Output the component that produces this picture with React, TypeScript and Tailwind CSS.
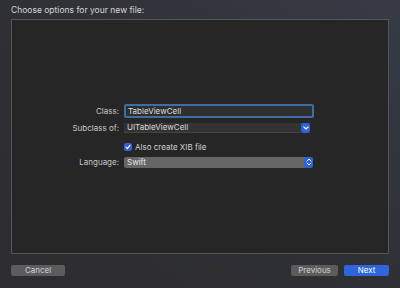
import React from 'react';

const font = { fontFamily: '"Inter", "Liberation Sans", sans-serif' };

const ChevronDown = () => (
  <svg width="6" height="4" viewBox="0 0 6 4" fill="none">
    <path d="M0.8 0.8 L3 3 L5.2 0.8" stroke="white" strokeWidth="1.1" strokeLinecap="round" strokeLinejoin="round" />
  </svg>
);

const UpDown = () => (
  <svg width="6" height="8" viewBox="0 0 6 8" fill="none">
    <path d="M1 3 L3 1 L5 3" stroke="white" strokeWidth="1" strokeLinecap="round" strokeLinejoin="round" />
    <path d="M1 5 L3 7 L5 5" stroke="white" strokeWidth="1" strokeLinecap="round" strokeLinejoin="round" />
  </svg>
);

const Row: React.FC<{ label?: string; children: React.ReactNode }> = ({ label, children }) => (
  <div className="flex items-center">
    <div className="w-[108px] text-right text-[8px] leading-[10px] text-[#c8c8c8] pr-[1px]">{label}</div>
    <div className="ml-[4px] w-[190px] flex items-center">{children}</div>
  </div>
);

export default function App() {
  return (
    <div
      className="w-[400px] h-[288px] flex flex-col px-[11px] bg-gradient-to-bl from-[#363b46] via-[#2f3034] to-[#2d2d2f]"
      style={font}
    >
      <div className="h-[19px] flex items-center pt-[1px] text-[8.5px] text-[#d6d6d6]">
        Choose options for your new file:
      </div>

      <div className="h-[235px] border border-[#555] bg-[#262626] flex flex-col justify-center pb-[2px]">
        <div className="flex flex-col">
          <Row label="Class:">
            <div className="w-full h-[14px] rounded-[2px] border-2 border-[#3b6ea5] bg-[#2f2f2f] flex items-center px-[2px] text-[8px] leading-[10px] text-[#dedede]">
              TableViewCell
            </div>
          </Row>
          <div className="h-[5px]" />
          <Row label="Subclass of:">
            <div className="flex-1 h-[10px] bg-[#333] border-b border-[#444] flex items-center px-[3px] text-[8px] leading-[10px] text-[#d6d6d6]">
              UITableViewCell
            </div>
            <div className="w-[9px] h-[10px] mr-[4px] rounded-[2px] bg-[#2f62d4] flex items-center justify-center">
              <ChevronDown />
            </div>
          </Row>
          <div className="h-[9px]" />
          <Row>
            <div className="w-[8px] h-[8px] rounded-[2px] bg-[#2f62d4] flex items-center justify-center">
              <svg width="6" height="6" viewBox="0 0 6 6" fill="none">
                <path d="M1 3.2 L2.4 4.6 L5 1.3" stroke="white" strokeWidth="1.1" strokeLinecap="round" strokeLinejoin="round" />
              </svg>
            </div>
            <span className="ml-[3px] text-[8px] leading-[10px] text-[#d0d0d0]">Also create XIB file</span>
          </Row>
          <div className="h-[5px]" />
          <Row label="Language:">
            <div className="flex-1 h-[11px] bg-[#666] rounded-l-[2px] flex items-center px-[3px] text-[8px] leading-[10px] text-[#e6e6e6]">
              Swift
            </div>
            <div className="w-[9px] h-[11px] mr-[1px] rounded-r-[2px] bg-[#2f62d4] flex items-center justify-center">
              <UpDown />
            </div>
          </Row>
        </div>
      </div>

      <div className="flex-1 flex items-center justify-between pb-[2px]">
        <button className="w-[54px] h-[11px] rounded-[2px] bg-[#5c5c5e] text-[8px] text-[#d2d2d2] leading-none">
          Cancel
        </button>
        <div className="flex items-center gap-[6px]">
          <button className="w-[47px] h-[11px] rounded-[2px] bg-[#5c5c5e] text-[8px] text-[#d2d2d2] leading-none">
            Previous
          </button>
          <button className="w-[45px] h-[11px] rounded-[2px] bg-[#2f65db] text-[8px] text-white leading-none">
            Next
          </button>
        </div>
      </div>
    </div>
  );
}
